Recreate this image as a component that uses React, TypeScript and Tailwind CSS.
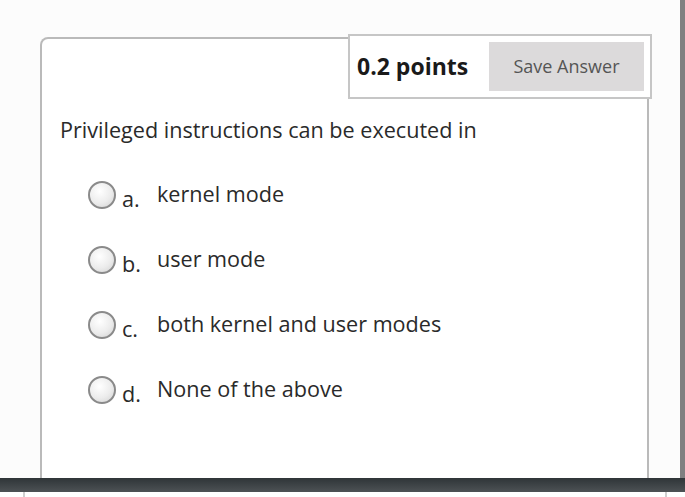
import React from 'react';

const options = [
  { letter: 'a.', text: 'kernel mode' },
  { letter: 'b.', text: 'user mode' },
  { letter: 'c.', text: 'both kernel and user modes' },
  { letter: 'd.', text: 'None of the above' },
];

const Radio = () => (
  <div className="mt-[1px] h-[28px] w-[28px] shrink-0 rounded-full border-2 border-[#8a8a8a] bg-[radial-gradient(circle_at_40%_35%,#ffffff_0%,#ececec_55%,#d0d0d0_100%)]" />
);

export default function App() {
  return (
    <div
      className="flex h-[497px] w-[685px] flex-col overflow-hidden bg-[#fcfcfc] text-[#2a2a2a]"
      style={{ fontFamily: '"Open Sans", "Noto Sans", sans-serif' }}
    >
      {/* Page area */}
      <div className="flex h-[478px]">
        <div className="relative flex-1 overflow-hidden pl-[40px] pt-[37px]">
          {/* Question card */}
          <div className="h-[460px] w-[609px] rounded-tl-[8px] rounded-tr-[2px] border-2 border-b-0 border-[#bababa] bg-white pl-[18px] pt-[77px]">
            <p className="text-[21.6px] leading-[28px]">Privileged instructions can be executed in</p>

            <div className="mt-[36px] flex flex-col gap-[37px] pl-[28px]">
              {options.map((o) => (
                <div key={o.letter} className="flex h-[28px] items-start">
                  <Radio />
                  <span className="ml-[6px] mt-[5px] w-[35px] text-[21.6px] leading-[28px]">{o.letter}</span>
                  <span className="text-[21.6px] leading-[28px]">{o.text}</span>
                </div>
              ))}
            </div>
          </div>

          {/* Points box overlapping the card corner */}
          <div className="absolute left-[348px] top-[34px] flex h-[65px] w-[304px] items-center border-2 border-[#c6c6c6] bg-white pl-[7px] pr-[6px]">
            <span className="text-[23px] font-bold text-[#1a1a1a]">0.2 points</span>
            <button className="ml-auto h-[49px] w-[155px] bg-[#dcdadb] text-[18px] text-[#555]">Save Answer</button>
          </div>
        </div>
        <div className="w-[5px] bg-[#808081]" />
      </div>

      {/* Dark bar */}
      <div className="h-[14px] bg-gradient-to-b from-[#2f3538] to-[#4d5255]" />

      {/* Strip below */}
      <div className="flex flex-1 bg-white">
        <div className="ml-[23px] w-[2px] bg-[#cfcfcf]" />
        <div className="flex-1" />
        <div className="mr-[18px] w-[2px] bg-[#cfcfcf]" />
      </div>
    </div>
  );
}
